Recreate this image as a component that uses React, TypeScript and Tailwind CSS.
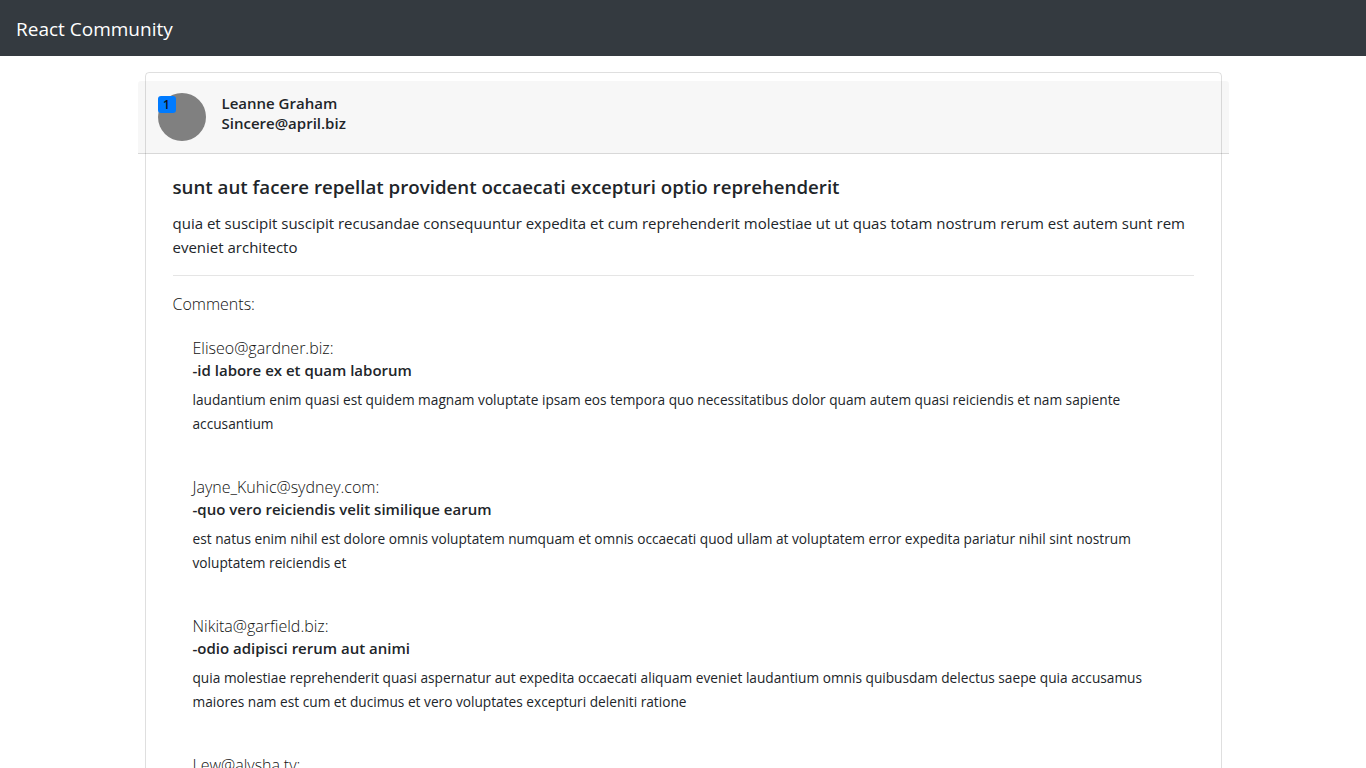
// Página de post com comentários
function App() {
    const post = {
        id: 1,
        autor: "Leanne Graham",
        email: "Sincere@april.biz",
        titulo: "sunt aut facere repellat provident occaecati excepturi optio reprehenderit",
        corpo: "quia et suscipit suscipit recusandae consequuntur expedita et cum reprehenderit molestiae ut ut quas totam nostrum rerum est autem sunt rem eveniet architecto",
    };

    const comentarios = [
        { email: "Eliseo@gardner.biz", nome: "id labore ex et quam laborum", corpo: "laudantium enim quasi est quidem magnam voluptate ipsam eos tempora quo necessitatibus dolor quam autem quasi reiciendis et nam sapiente accusantium" },
        { email: "Jayne_Kuhic@sydney.com", nome: "quo vero reiciendis velit similique earum", corpo: "est natus enim nihil est dolore omnis voluptatem numquam et omnis occaecati quod ullam at voluptatem error expedita pariatur nihil sint nostrum voluptatem reiciendis et" },
        { email: "Nikita@garfield.biz", nome: "odio adipisci rerum aut animi", corpo: "quia molestiae reprehenderit quasi aspernatur aut expedita occaecati aliquam eveniet laudantium omnis quibusdam delectus saepe quia accusamus maiores nam est cum et ducimus et vero voluptates excepturi deleniti ratione" },
        { email: "Lew@alysha.tv", nome: "alias odio sit", corpo: "non et atque occaecati deserunt quas accusantium unde odit nobis qui voluptatem quia voluptas consequuntur itaque dolor et qui rerum deleniti ut occaecati" },
        { email: "Hayden@althea.biz", nome: "vero eaque aliquid doloribus et culpa", corpo: "harum non quasi et ratione tempore iure ex voluptates in ratione harum architecto fugit inventore cupiditate voluptates magni quo et" },
    ];

    return (
        <div className="min-h-screen bg-white text-[#212529] font-['Open_Sans',sans-serif]">
            {/* Barra de navegação */}
            <nav className="h-14 bg-[#343a40] flex items-center px-4">
                <span className="text-[19px] text-white pt-[3px]">React Community</span>
            </nav>

            {/* Card do post */}
            <div className="pt-4 flex justify-center">
                <div className="w-[1077px] border border-black/[0.125] rounded">
                    {/* Cabeçalho com autor */}
                    <div className="mt-2 -mx-[8px] px-5 py-3 bg-black/[0.03] border-b border-black/[0.125] rounded-t-[3px] flex items-start">
                        <div className="relative w-12 h-12 rounded-full bg-[#808080] shrink-0">
                            <span className="absolute left-0 top-[3px] w-[18px] h-[17px] rounded-[3px] bg-[#007bff] text-[12px] font-semibold leading-[17px] text-center text-[#111]">
                                {post.id}
                            </span>
                        </div>
                        <div className="ml-4 flex flex-col text-[15px] font-semibold leading-5">
                            <span>{post.autor}</span>
                            <span>{post.email}</span>
                        </div>
                    </div>

                    {/* Corpo do post */}
                    <div className="px-[27px] pt-[21px]">
                        <h5 className="text-[18.7px] font-semibold leading-6 mb-3">{post.titulo}</h5>
                        <p className="text-[15px] leading-6">{post.corpo}</p>
                        <hr className="mt-4 border-black/10" />
                        <p className="mt-4 text-base leading-6 font-light text-[#111]">Comments:</p>

                        {/* Lista de comentários */}
                        <div className="mt-5 pl-5 flex flex-col gap-[39px]">
                            {comentarios.map((c, i) => (
                                <div key={i} className="flex flex-col">
                                    <span className="text-base leading-6 font-light text-[#111]">{c.email}:</span>
                                    <span className="text-[15px] leading-5 font-semibold">-{c.nome}</span>
                                    <p className="mt-2 text-[13.7px] leading-6">{c.corpo}</p>
                                </div>
                            ))}
                        </div>
                        <div className="h-8" />
                    </div>
                </div>
            </div>
        </div>
    );
}

export default App;
